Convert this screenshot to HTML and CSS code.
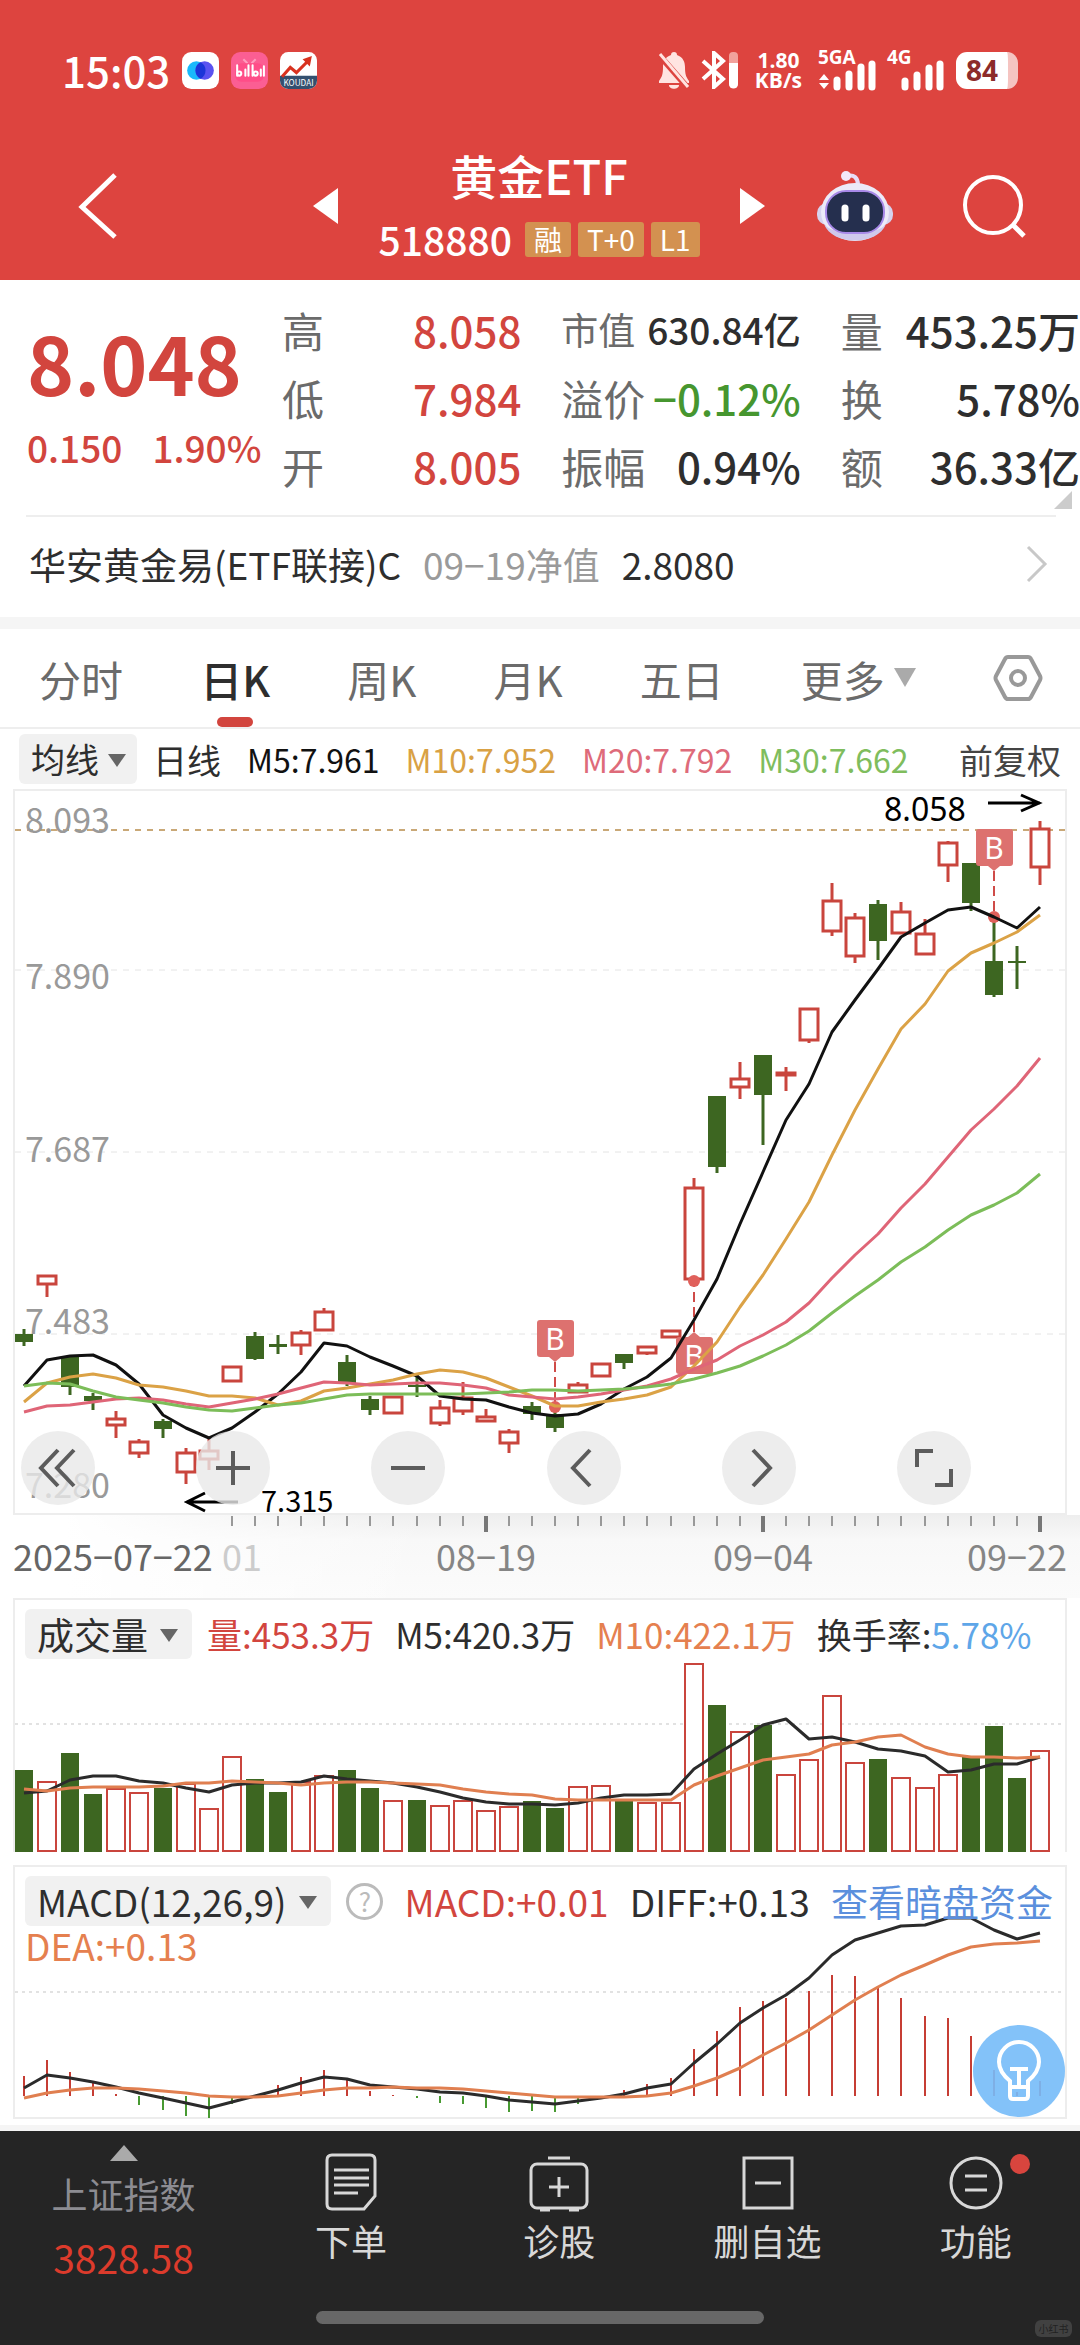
FILE: index.html
```html
<!DOCTYPE html>
<html lang="zh-CN">
<head>
    <meta charset="utf-8">
    <meta name="viewport" content="width=device-width, initial-scale=1">
    <title>黄金ETF 518880</title>
    <link rel="stylesheet" href="styles.css">
</head>
<body>
<header class="header">
    <div class="status">
        <span class="clock">15:03</span>
        <svg class="app-icon" viewBox="0 0 36 36"><rect width="36" height="36" rx="9" fill="#fff"/><circle cx="14" cy="18" r="9" fill="#19b9fb"/><circle cx="22" cy="18" r="9" fill="#5a52f0"/><path d="M18 10a9 9 0 0 1 0 16a9 9 0 0 1 0-16z" fill="#1b35d8"/></svg>
        <svg class="app-icon" viewBox="0 0 36 36"><rect width="36" height="36" rx="9" fill="#fb5e93"/><path d="M12 7l4 4M24 7l-4 4" stroke="#ff9cbe" stroke-width="2"/><rect x="4" y="11" width="28" height="18" rx="6" fill="#ff4d88"/><g fill="none" stroke="#fff" stroke-width="2" stroke-linecap="round"><path d="M6 13v10M14 17v6M17 13v10M21 13v10M29 17v6M32 14v9"/><circle cx="8" cy="21" r="2"/><circle cx="24" cy="21" r="2"/></g></svg>
        <svg class="app-icon" viewBox="0 0 36 36"><rect width="36" height="36" rx="8" fill="#fff"/><path d="M0 23h36v5a8 8 0 0 1-8 8H8a8 8 0 0 1-8-8z" fill="#34506f"/><path d="M2 24L10 15l6 5L28 8" fill="none" stroke="#d8321f" stroke-width="3"/><path d="M22 7l9-3-2 10z" fill="#d8321f"/><text x="18" y="33" class="app-text">KOUDAI</text></svg>
        <span class="status-right">
            <svg width="32" height="38" viewBox="0 0 32 38"><path d="M16 1c2 0 3 1 3 3 6 2 8 7 8 12 0 7 1 10 4 14v2H1v-2c3-4 4-7 4-14 0-5 2-10 8-12 0-2 1-3 3-3zM11 34h10c0 5-10 5-10 0z" fill="#ffe4e1"/><path d="M2 5l28 32" stroke="#dd443f" stroke-width="6"/><path d="M2 3l28 33" stroke="#ffe4e1" stroke-width="3"/></svg>
            <svg width="38" height="38" viewBox="0 0 38 38"><path d="M2 10l20 18-9 8V2l9 8L2 28" fill="none" stroke="#fff" stroke-width="4"/><rect x="28" y="1" width="9" height="36" rx="4" fill="#f2a19c"/><path d="M28 12h9v21a4 4 0 0 1-9 0z" fill="#fff"/></svg>
            <span class="net-speed"><span>1.80</span><span>KB/s</span></span>
            <svg class="signal" width="58" height="42" viewBox="0 0 58 42"><text x="0" y="15" class="net-text">5GA</text><path d="M6 25l5 6H1zM6 40l5-6H1z" fill="#fff"/><path d="M19 38v-7M31 38V25M43 38V18M54 38V15" stroke="#fff" stroke-width="7" stroke-linecap="round"/></svg>
            <svg class="signal" width="58" height="42" viewBox="0 0 58 42"><text x="0" y="15" class="net-text">4G</text><path d="M18 38v-6M30 38V26M42 38V19M53 38V15" stroke="#fff" stroke-width="7" stroke-linecap="round"/></svg>
            <span class="battery">84</span>
        </span>
    </div>
    <div class="titlebar">
        <button class="icon-btn" aria-label="返回"><svg width="44" height="70" viewBox="0 0 44 70"><path d="M39 4L6 36l33 30" fill="none" stroke="#fff" stroke-width="5"/></svg></button>
        <div class="title-group">
            <button class="icon-btn" aria-label="上一只"><svg width="26" height="38" viewBox="0 0 26 38"><path d="M26 1v36L1 19z" fill="#fff"/></svg></button>
            <div class="title">
                <h1>黄金ETF</h1>
                <div class="code"><span>518880</span><span class="tag">融</span><span class="tag">T+0</span><span class="tag">L1</span></div>
            </div>
            <button class="icon-btn" aria-label="下一只"><svg width="26" height="38" viewBox="0 0 26 38"><path d="M0 1v36l25-18z" fill="#fff"/></svg></button>
        </div>
        <button class="icon-btn" aria-label="智能助手"><svg width="76" height="72" viewBox="0 0 76 72"><path d="M41 15c0-7-4-11-11-9" fill="none" stroke="#e8dcf6" stroke-width="4"/><circle cx="29" cy="6" r="5" fill="#f3e8fa"/><rect x="0" y="33" width="76" height="22" rx="10" fill="#d6d2ee"/><ellipse cx="38" cy="42" rx="34" ry="29" fill="#eceaf8"/><path d="M7 54c8 22 54 22 62 0-8 12-54 12-62 0z" fill="#cfc9ec"/><rect x="9" y="21" width="58" height="42" rx="20" fill="#252f4e" stroke="#a889e8" stroke-width="2"/><path d="M28 38v10M49 38v10" stroke="#fff" stroke-width="7" stroke-linecap="round"/></svg></button>
        <button class="icon-btn search" aria-label="搜索"><svg width="64" height="64" viewBox="0 0 64 64"><circle cx="31" cy="31" r="28" fill="none" stroke="#fff" stroke-width="4"/><path d="M51 51l11 11" stroke="#fff" stroke-width="5"/></svg></button>
    </div>
</header>

<main>
    <section class="quote">
        <div class="price">
            <div class="price-now">8.048</div>
            <div class="price-diff"><span>0.150</span><span>1.90%</span></div>
        </div>
        <dl class="stats">
            <div><dt>高</dt><dd class="red">8.058</dd></div>
            <div class="small"><dt>市值</dt><dd>630.84亿</dd></div>
            <div><dt>量</dt><dd>453.25万</dd></div>
            <div><dt>低</dt><dd class="red">7.984</dd></div>
            <div><dt>溢价</dt><dd class="green">−0.12%</dd></div>
            <div><dt>换</dt><dd>5.78%</dd></div>
            <div><dt>开</dt><dd class="red">8.005</dd></div>
            <div><dt>振幅</dt><dd>0.94%</dd></div>
            <div><dt>额</dt><dd>36.33亿</dd></div>
        </dl>
        <svg class="corner" width="18" height="18" viewBox="0 0 18 18"><path d="M18 0v18H0z" fill="#ccc"/></svg>
    </section>

    <a class="fund" href="#fund">
        <span>华安黄金易(ETF联接)C</span>
        <span class="fund-date">09−19净值</span>
        <span>2.8080</span>
        <svg class="fund-arrow" width="22" height="38" viewBox="0 0 22 38"><path d="M2 2l17 17L2 36" fill="none" stroke="#c8c8c8" stroke-width="3"/></svg>
    </a>

    <nav class="tabs">
        <button>分时</button>
        <button class="active">日K</button>
        <button>周K</button>
        <button>月K</button>
        <button>五日</button>
        <button class="more">更多<svg width="22" height="20" viewBox="0 0 22 20"><path d="M0 0h22L11 19z" fill="#aaa"/></svg></button>
        <button aria-label="设置"><svg width="50" height="48" viewBox="0 0 50 48"><path d="M15 3h20q2 0 3 2l9 17q1 2 0 4l-9 17q-1 2-3 2H15q-2 0-3-2L3 26q-1-2 0-4l9-17q1-2 3-2z" fill="none" stroke="#999" stroke-width="4"/><circle cx="25" cy="24" r="7" fill="none" stroke="#999" stroke-width="4"/></svg></button>
    </nav>

    <div class="ma-row">
        <span class="picker"><select aria-label="主图指标"><option>均线</option></select></span>
        <span>日线</span>
        <span class="ma5">M5:7.961</span>
        <span class="ma10">M10:7.952</span>
        <span class="ma20">M20:7.792</span>
        <span class="ma30">M30:7.662</span>
        <span class="adjust">前复权</span>
    </div>

    <section class="panel">
        <svg class="plot" id="kline" viewBox="15 790 1050 722">
            <g class="grid">
                <path d="M15 969H1065M15 1151H1065M15 1333H1065"/>
                <path class="top-line" d="M15 829H1065"/>
            </g>
            <g class="price-label">
                <text x="25" y="832">8.093</text>
                <text x="25" y="988">7.890</text>
                <text x="25" y="1161">7.687</text>
                <text x="25" y="1333">7.483</text>
                <text x="25" y="1497">7.280</text>
            </g>
        </svg>
        <div class="tools">
            <button aria-label="最早"><svg width="40" height="40" viewBox="0 0 40 40"><path d="M20 2L3 20l17 18M36 2L19 20l17 18"/></svg></button>
            <button aria-label="放大"><svg width="40" height="40" viewBox="0 0 40 40"><path d="M3 20h34M20 3v34"/></svg></button>
            <button aria-label="缩小"><svg width="40" height="40" viewBox="0 0 40 40"><path d="M3 20h34"/></svg></button>
            <button aria-label="左移"><svg width="40" height="40" viewBox="0 0 40 40"><path d="M26 2L9 20l17 18"/></svg></button>
            <button aria-label="右移"><svg width="40" height="40" viewBox="0 0 40 40"><path d="M14 2l17 18-17 18"/></svg></button>
            <button aria-label="全屏"><svg width="40" height="40" viewBox="0 0 40 40"><path d="M3 19V3h16M37 21v16H21"/></svg></button>
        </div>
    </section>

    <svg class="axis" id="axis" viewBox="0 1514 1080 83">
        <text x="13" y="1570" class="first">2025−07−22</text>
        <text x="222" y="1570" class="faded">01</text>
        <text x="486" y="1570" text-anchor="middle">08−19</text>
        <text x="763" y="1570" text-anchor="middle">09−04</text>
        <text x="1067" y="1570" text-anchor="end">09−22</text>
    </svg>

    <section class="panel volume">
        <svg class="plot" id="volume" viewBox="15 1599 1050 252"><path class="dots" d="M15 1723H1065"/></svg>
        <div class="panel-head">
            <span class="picker"><select aria-label="副图指标一"><option>成交量</option></select></span>
            <span class="red">量:453.3万</span>
            <span>M5:420.3万</span>
            <span class="orange">M10:422.1万</span>
            <span>换手率:<span class="blue">5.78%</span></span>
        </div>
    </section>

    <section class="panel">
        <svg class="plot" id="macd" viewBox="15 1866 1050 250"><path class="dots" d="M15 1991H1065"/></svg>
        <div class="panel-head macd-head">
            <span class="picker"><select aria-label="副图指标二"><option>MACD(12,26,9)</option></select></span>
            <button class="help" aria-label="说明">?</button>
            <span class="red">MACD:+0.01</span>
            <span>DIFF:+0.13</span>
            <a class="dark-pool" href="#funds">查看暗盘资金</a>
            <span class="orange dea">DEA:+0.13</span>
        </div>
        <button class="bulb" aria-label="提示"><svg width="46" height="64" viewBox="0 0 46 64"><path d="M14 48v-6C8 37 3 31 3 23a20 20 0 0 1 40 0c0 8-5 14-11 19v6zM14 48v9q0 3 3 3h12q3 0 3-3v-9M14 30h18M23 30v17" fill="none" stroke="#fff" stroke-width="4"/></svg></button>
    </section>
</main>

<footer class="bottom">
    <nav class="bottom-nav">
        <a href="#index" class="index">
            <svg width="28" height="16" viewBox="0 0 28 16"><path d="M14 0l14 16H0z" fill="#aaa"/></svg>
            <span>上证指数</span>
            <span class="index-value">3828.58</span>
        </a>
        <a href="#order">
            <svg width="60" height="60" viewBox="0 0 60 60"><path d="M11 3h38q5 0 5 5v36L43 57H11q-5 0-5-5V8q0-5 5-5zM13 18h35M13 26h35M13 33h35M13 41h24"/></svg>
            下单
        </a>
        <a href="#diagnose">
            <svg width="60" height="60" viewBox="0 0 60 60"><rect x="2" y="12" width="56" height="44" rx="6"/><path d="M19 6h22M20 35h20M30 25v20M11 58h10M40 58h10"/></svg>
            诊股
        </a>
        <a href="#remove">
            <svg width="60" height="60" viewBox="0 0 60 60"><path d="M6 6h48v50H6zM17 31h26"/></svg>
            删自选
        </a>
        <a href="#functions">
            <svg width="60" height="60" viewBox="0 0 60 60"><circle cx="30" cy="31" r="25"/><path d="M19 24h22M19 38h22"/></svg>
            功能
            <i class="badge"></i>
        </a>
    </nav>
    <div class="home-bar"></div>
    <span class="watermark">小红书</span>
</footer>
<script src="chart.js"></script>
</body>
</html>
```

FILE: styles.css
```css
* {
    box-sizing: border-box;
}

body {
    margin: 0;
    background: #fff;
    color: #2e2e2e;
    font-family: "Noto Sans CJK SC", "Noto Sans", sans-serif;
}

button, select {
    margin: 0;
    padding: 0;
    border: 0;
    background: none;
    color: inherit;
    font: inherit;
}

a {
    color: inherit;
    text-decoration: none;
}

svg {
    display: block;
    flex: none;
}

.red { color: #d2453e; }
.green { color: #46962f; }
.orange { color: #e5804f; }
.blue { color: #5ea6e8; }

/* header */
.header {
    background: #dd443f;
    color: #fff;
    height: 280px;
}

.status {
    display: flex;
    align-items: center;
    gap: 12px;
    height: 140px;
    padding: 0 62px;
}

.clock {
    font-size: 42px;
    font-weight: 500;
    line-height: 42px;
}

.app-icon {
    width: 37px;
    height: 37px;
}

.app-text {
    font-size: 8px;
    fill: #fff;
    text-anchor: middle;
}

.status-right {
    display: flex;
    align-items: center;
    gap: 11px;
    margin-left: auto;
}

.net-speed {
    display: flex;
    flex-direction: column;
    padding: 0 5px;
    font: bold 21px/20px "Open Sans", sans-serif;
    text-align: center;
}

.signal {
    overflow: visible;
}

.net-text {
    font: bold 19px "Open Sans", sans-serif;
    fill: #fff;
}

.battery {
    width: 62px;
    border-right: 10px solid #f5c4c1;
    border-radius: 11px;
    background: #fff;
    color: #8c2b2a;
    font: bold 28px/37px "Noto Sans", sans-serif;
    text-align: center;
}

.titlebar {
    display: flex;
    align-items: center;
    height: 140px;
    padding: 0 54px 8px 76px;
}

.icon-btn {
    display: flex;
}

.title-group {
    display: flex;
    align-items: center;
    justify-content: space-between;
    flex: 1;
    margin: 0 51px 0 192px;
}

.search {
    margin-left: 69px;
}

.title {
    text-align: center;
}

.title h1 {
    margin: 0;
    font-size: 47px;
    line-height: 66px;
    font-weight: 500;
}

.code {
    display: flex;
    align-items: center;
    justify-content: center;
    gap: 7px;
    font-size: 39px;
    font-weight: 500;
    line-height: 62px;
}

.code span:first-child {
    margin-right: 6px;
}

.tag {
    padding: 0 9px;
    border-radius: 3px;
    background: #d39150;
    font-size: 28px;
    font-weight: 400;
    line-height: 35px;
}

/* quote */
.quote {
    position: relative;
    display: flex;
    height: 237px;
    padding: 15px 0 0 27px;
}

.quote::after {
    content: "";
    position: absolute;
    left: 26px;
    right: 24px;
    bottom: 0;
    border-bottom: 2px solid #eee;
}

.price {
    width: 255px;
    color: #d2453e;
}

.price-now {
    font-size: 80px;
    line-height: 132px;
    font-weight: 700;
}

.price-diff {
    display: flex;
    gap: 30px;
    font-size: 37px;
    font-weight: 500;
    line-height: 40px;
}

.stats {
    flex: 1;
    display: grid;
    grid-template-columns: repeat(3, 1fr);
    grid-auto-rows: 68px;
    column-gap: 40px;
    margin: 0;
    font-size: 42px;
}

.stats div {
    display: flex;
    align-items: center;
    justify-content: space-between;
    white-space: nowrap;
}

.stats .small {
    font-size: 37px;
}

.stats dt {
    color: #6b6b6b;
}

.stats dd {
    margin: 0;
    font-weight: 500;
}

.corner {
    position: absolute;
    right: 8px;
    bottom: 8px;
}

.fund {
    display: flex;
    align-items: center;
    gap: 22px;
    height: 100px;
    padding: 0 32px 6px 29px;
    font-size: 37px;
}

.fund-date {
    color: #9a9a9a;
}

.fund-arrow {
    margin-left: auto;
}

/* period tabs */
.tabs {
    display: flex;
    justify-content: space-between;
    height: 112px;
    padding: 0 37px 0 39px;
    border-top: 12px solid #f5f5f5;
    border-bottom: 2px solid #eee;
    color: #6b6b6b;
    font-size: 42px;
}

.tabs button {
    display: flex;
    align-items: center;
}

.tabs .active {
    position: relative;
    color: #2e2e2e;
    font-weight: 500;
}

.tabs .active::after {
    content: "";
    position: absolute;
    left: 50%;
    bottom: 0;
    width: 36px;
    height: 10px;
    margin-left: -18px;
    border-radius: 5px;
    background: #d2453e;
}

.more {
    gap: 9px;
}

/* indicators */
.picker {
    position: relative;
    display: inline-flex;
    border-radius: 6px;
    background: #f1f1f1;
}

.picker select {
    appearance: none;
    padding: 0 42px 0 12px;
    line-height: 50px;
}

.picker::after {
    content: "";
    position: absolute;
    right: 14px;
    top: 20px;
    border: 9px solid transparent;
    border-top: 13px solid #666;
    border-bottom: 0;
}

.ma-row {
    display: flex;
    align-items: center;
    gap: 26px;
    height: 60px;
    padding: 0 19px;
    font-size: 34px;
    white-space: nowrap;
}

.ma-row .picker {
    margin-right: -10px;
}

.ma-row .picker select {
    padding-right: 38px;
}

.ma-row .picker::after {
    right: 11px;
}

.ma5, .ma10, .ma20, .ma30 {
    font-size: 32px;
}

.ma5 { color: #111; }
.ma10 { color: #d9a144; }
.ma20 { color: #de6b7a; }
.ma30 { color: #7fbd5d; }

.adjust {
    margin-left: auto;
    color: #444;
}

/* charts */
.panel {
    position: relative;
    display: grid;
    margin: 0 13px;
    border: 2px solid #ededed;
}

.plot, .tools, .panel-head {
    grid-area: 1 / 1;
}

.plot {
    width: 100%;
    height: auto;
    overflow: visible;
}

.grid path {
    stroke: #e4e4e4;
    stroke-width: 1;
    stroke-dasharray: 6 6;
}

.grid .top-line {
    stroke: #c9a877;
    stroke-width: 2;
}

.dots {
    stroke: #e2e2e2;
    stroke-width: 2;
    stroke-dasharray: 3 4;
}

.price-label {
    fill: #999;
    font-size: 34px;
}

.high-label {
    fill: #000;
    font: 32px "Noto Sans", sans-serif;
}

.low-label {
    fill: #000;
    font-size: 29px;
}

.buy-label {
    fill: #fff;
    font: 30px "Noto Sans", sans-serif;
    text-anchor: middle;
}

.tools {
    align-self: end;
    display: flex;
    justify-content: space-between;
    padding: 0 94px 8px 6px;
}

.tools button {
    display: flex;
    align-items: center;
    justify-content: center;
    width: 74px;
    height: 74px;
    border-radius: 50%;
    background: rgba(232, 232, 232, 0.8);
}

.tools path {
    fill: none;
    stroke: #5c5c5c;
    stroke-width: 4;
}

.axis {
    width: 100%;
    height: auto;
    background: linear-gradient(to right, #fff 6%, rgba(255, 255, 255, 0) 40%), linear-gradient(#eee, #f8f8f8 30%, #fbfbfb);
    font-size: 36px;
    fill: #858585;
}

.axis .first {
    fill: #666;
}

.axis .faded {
    fill: #ccc;
}

.axis path {
    stroke: #999;
    stroke-width: 2;
}

.axis .major {
    stroke: #777;
    stroke-width: 4;
}

.volume {
    margin-bottom: 13px;
    border-bottom: 0;
}

.panel-head {
    position: relative;
    align-self: start;
    display: flex;
    align-items: center;
    gap: 21px;
    padding: 9px 0 0 10px;
    font-size: 35px;
    line-height: 50px;
    white-space: nowrap;
}

.panel-head .picker {
    margin-right: -6px;
}

.panel-head .picker select {
    padding-right: 44px;
    font-size: 37px;
}

.macd-head {
    flex-wrap: wrap;
    justify-content: space-between;
    gap: 0;
    padding-right: 12px;
    font-size: 37px;
}

.help {
    width: 37px;
    height: 37px;
    border: 3px solid #bbb;
    border-radius: 50%;
    color: #bbb;
    font-size: 26px;
    line-height: 30px;
}

.dark-pool {
    color: #5b8fdd;
}

.dea {
    flex-basis: 100%;
    line-height: 38px;
}

.bulb {
    position: absolute;
    right: 0;
    bottom: 0;
    display: flex;
    align-items: center;
    justify-content: center;
    width: 92px;
    height: 92px;
    border-radius: 50%;
    background: rgba(118, 187, 248, 0.9);
}

/* bottom bar */
.bottom {
    position: relative;
    height: 221px;
    margin-top: 6px;
    border-top: 6px solid #f5f5f5;
    background: #252525;
    color: #d8d8d8;
}

.bottom-nav {
    display: grid;
    grid-template-columns: 247px repeat(4, 1fr);
    height: 176px;
}

.bottom-nav a {
    position: relative;
    display: flex;
    flex-direction: column;
    align-items: center;
    padding-top: 21px;
    font-size: 36px;
    line-height: 56px;
}

.bottom-nav a path, .bottom-nav a rect, .bottom-nav a circle {
    fill: none;
    stroke: #d8d8d8;
    stroke-width: 3;
}

.bottom-nav .index {
    padding-top: 14px;
    color: #8c8c92;
    line-height: 64px;
}

.bottom-nav .index path {
    fill: #aaa;
    stroke: none;
}

.bottom-nav .index-value {
    color: #dc3b2c;
    font-size: 39px;
}

.badge {
    position: absolute;
    top: 23px;
    left: 50%;
    width: 20px;
    height: 20px;
    margin-left: 34px;
    border-radius: 50%;
    background: #d8453e;
}

.home-bar {
    width: 448px;
    height: 13px;
    margin: 4px auto 0;
    border-radius: 7px;
    background: #676767;
}

.watermark {
    position: absolute;
    right: 8px;
    bottom: 9px;
    width: 37px;
    border-radius: 6px;
    background: #414141;
    color: #222;
    font-size: 10px;
    line-height: 17px;
    text-align: center;
}
```

FILE: chart.js
```js
// candle: r = up, g = down, then high, body top, body bottom, low
var candles = [
    ["g", 1328, 1333, 1341, 1345], ["r", 1275, 1275, 1283, 1296], ["g", 1354, 1355, 1386, 1394],
    ["g", 1392, 1395, 1400, 1409], ["r", 1410, 1418, 1424, 1437], ["r", 1438, 1441, 1452, 1457],
    ["g", 1418, 1420, 1428, 1437], ["r", 1447, 1452, 1471, 1483], ["r", 1438, 1450, 1458, 1469],
    ["r", 1366, 1366, 1380, 1380], ["g", 1331, 1335, 1358, 1359], ["g", 1334, 1343, 1346, 1353],
    ["r", 1329, 1332, 1344, 1354], ["r", 1307, 1311, 1329, 1329], ["g", 1354, 1361, 1382, 1385],
    ["g", 1395, 1398, 1409, 1414], ["r", 1396, 1396, 1412, 1412], ["g", 1373, 1384, 1386, 1396],
    ["r", 1399, 1407, 1422, 1425], ["r", 1381, 1397, 1410, 1414], ["r", 1408, 1416, 1420, 1420],
    ["r", 1428, 1431, 1442, 1452], ["g", 1401, 1405, 1413, 1419], ["g", 1408, 1413, 1427, 1431],
    ["r", 1381, 1384, 1391, 1391], ["r", 1363, 1363, 1375, 1375], ["g", 1353, 1353, 1362, 1368],
    ["r", 1346, 1346, 1352, 1354], ["r", 1330, 1330, 1336, 1337], ["r", 1177, 1187, 1278, 1278],
    ["g", 1095, 1095, 1166, 1172], ["r", 1061, 1078, 1086, 1098], ["g", 1054, 1054, 1094, 1144],
    ["r", 1066, 1072, 1074, 1090], ["r", 1008, 1008, 1039, 1042], ["r", 882, 900, 930, 935],
    ["r", 912, 917, 955, 962], ["g", 899, 903, 940, 959], ["r", 901, 911, 932, 932],
    ["r", 918, 933, 953, 953], ["r", 840, 842, 864, 881], ["g", 862, 862, 902, 910],
    ["g", 916, 960, 994, 996], ["g", 945, 960, 962, 988], ["r", 820, 828, 866, 884]
];
var ma5 = [1385, 1359, 1355, 1354, 1364, 1383, 1414, 1427, 1437, 1427, 1411, 1393, 1371, 1342, 1345, 1356, 1365, 1375, 1395, 1398, 1399, 1406, 1412, 1415, 1413, 1403, 1388, 1376, 1357, 1319, 1278, 1223, 1171, 1119, 1083, 1031, 999, 968, 936, 922, 909, 906, 916, 927, 906];
var ma10 = [1401, 1382, 1376, 1373, 1377, 1384, 1386, 1390, 1395, 1395, 1397, 1404, 1400, 1390, 1387, 1383, 1379, 1373, 1369, 1371, 1377, 1386, 1395, 1405, 1405, 1401, 1398, 1394, 1386, 1365, 1341, 1306, 1274, 1238, 1201, 1154, 1109, 1068, 1028, 1003, 970, 952, 942, 931, 914];
var ma20 = [1411, 1405, 1404, 1401, 1398, 1397, 1399, 1403, 1406, 1402, 1398, 1393, 1387, 1381, 1382, 1384, 1383, 1382, 1382, 1384, 1387, 1394, 1396, 1398, 1396, 1393, 1389, 1385, 1378, 1368, 1359, 1345, 1334, 1321, 1302, 1277, 1254, 1233, 1207, 1183, 1156, 1129, 1108, 1085, 1057];
var ma30 = [1385, 1382, 1383, 1390, 1396, 1399, 1402, 1406, 1409, 1410, 1407, 1404, 1402, 1398, 1394, 1393, 1393, 1393, 1393, 1393, 1392, 1391, 1389, 1389, 1390, 1389, 1388, 1386, 1383, 1378, 1372, 1365, 1355, 1344, 1330, 1312, 1295, 1279, 1261, 1246, 1229, 1214, 1204, 1192, 1173];

// volume bar heights
var volumes = [82, 71, 99, 58, 64, 60, 64, 69, 44, 96, 73, 60, 71, 77, 82, 64, 52, 52, 47, 52, 42, 46, 51, 44, 66, 67, 52, 50, 50, 189, 147, 121, 127, 78, 93, 157, 90, 93, 75, 65, 78, 95, 126, 74, 102];
var vol5 = [1792, 1790, 1779, 1775, 1775, 1780, 1782, 1787, 1791, 1784, 1782, 1782, 1781, 1775, 1778, 1780, 1782, 1786, 1791, 1797, 1801, 1803, 1803, 1804, 1802, 1797, 1794, 1794, 1793, 1768, 1753, 1739, 1724, 1718, 1738, 1736, 1741, 1748, 1750, 1755, 1771, 1769, 1763, 1763, 1756];
var vol10 = [1788, 1790, 1787, 1786, 1786, 1786, 1785, 1782, 1782, 1780, 1781, 1782, 1784, 1782, 1781, 1781, 1782, 1783, 1784, 1788, 1791, 1793, 1794, 1798, 1799, 1799, 1799, 1799, 1799, 1784, 1775, 1767, 1759, 1756, 1753, 1744, 1741, 1736, 1734, 1746, 1753, 1756, 1756, 1757, 1756];

// macd columns, positive is up
var hist = [20, 36, 24, 15, 2, -9, -14, -20, -22, -8, 0, 11, 19, 26, 16, 5, 1, -2, -7, -8, -12, -16, -15, -16, -8, -2, 6, 12, 18, 47, 65, 89, 95, 98, 105, 121, 120, 108, 98, 80, 78, 60, 26, 4, 15];
var diff = [2087, 2074, 2077, 2081, 2086, 2092, 2097, 2102, 2107, 2101, 2095, 2089, 2082, 2076, 2078, 2084, 2086, 2088, 2091, 2092, 2095, 2099, 2101, 2103, 2100, 2097, 2093, 2087, 2083, 2062, 2043, 2022, 2007, 1994, 1977, 1954, 1939, 1932, 1925, 1924, 1917, 1917, 1929, 1938, 1932];
var dea = [2097, 2092, 2089, 2087, 2087, 2088, 2090, 2092, 2095, 2096, 2096, 2095, 2092, 2089, 2087, 2087, 2086, 2087, 2087, 2088, 2090, 2092, 2094, 2096, 2096, 2096, 2096, 2095, 2092, 2085, 2077, 2067, 2054, 2042, 2029, 2014, 1999, 1986, 1974, 1964, 1954, 1946, 1943, 1942, 1940];

var RED = "#c9453d";
var GREEN = "#3d6621";

function x(i) {
    return Math.round(24 + i * 23.09);
}

function add(id, html) {
    document.getElementById(id).insertAdjacentHTML("beforeend", html);
}

function rect(cx, y, w, h, fill, stroke, sw) {
    return '<rect x="' + (cx - w / 2) + '" y="' + y + '" width="' + w + '" height="' + h + '" fill="' + fill + '" stroke="' + stroke + '" stroke-width="' + sw + '"/>';
}

function stroke(d, color, width, extra) {
    return '<path d="' + d + '" fill="none" stroke="' + color + '" stroke-width="' + width + '" ' + (extra || "") + '/>';
}

function line(values, color, width) {
    var points = values.map(function (y, i) { return x(i) + " " + y; });
    return stroke("M" + points.join("L"), color, width, 'stroke-linejoin="round"');
}

// buy marker: tag box with a dashed lead to the traded price
function buy(i, top, dot) {
    var cx = x(i);
    var down = dot > top;
    var edge = down ? top + 37 : top;
    var tip = down ? edge + 5 : edge - 5;
    return stroke("M" + cx + " " + tip + "V" + dot, "#cf4b48", 2, 'stroke-dasharray="10 5"') +
        '<circle cx="' + cx + '" cy="' + dot + '" r="6" fill="#e0605b"/>' +
        '<rect x="' + (cx - 18) + '" y="' + top + '" width="37" height="37" rx="3" fill="#dd716f"/>' +
        '<path d="M' + (cx - 6) + " " + edge + "H" + (cx + 6) + "L" + cx + " " + tip + 'z" fill="#dd716f"/>' +
        '<text class="buy-label" x="' + cx + '" y="' + (top + 30) + '">B</text>';
}

var html = "";
candles.forEach(function (c, i) {
    if (c[0] === "r") {
        html += stroke("M" + x(i) + " " + c[1] + "V" + c[2] + "M" + x(i) + " " + c[3] + "V" + c[4], RED, 3);
        html += rect(x(i), c[2], 18, c[3] - c[2], "#fff", RED, 3);
    } else {
        html += stroke("M" + x(i) + " " + c[1] + "V" + c[4], GREEN, 3);
        html += rect(x(i), c[2], 18, c[3] - c[2], GREEN, "none", 0);
    }
});
html += buy(23, 1319, 1406) + buy(29, 1336, 1280) + buy(42, 828, 916);
html += line(ma5, "#111", 3) + line(ma10, "#dba246", 3) + line(ma20, "#df6577", 3) + line(ma30, "#7cbd59", 3);
html += '<text class="high-label" x="884" y="820">8.058</text>' + stroke("M988 802H1040M1021 794L1039 802L1021 810", "#000", 3);
html += '<text class="low-label" x="261" y="1511">7.315</text>' + stroke("M238 1501H187M205 1492L187 1501L205 1510", "#000", 3);
add("kline", html);

html = "";
for (var i = 9; i < 45; i++) {
    var major = i === 20 || i === 32 || i === 44;
    html += '<path class="' + (major ? "major" : "minor") + '" d="M' + x(i) + " 1515V" + (major ? 1531 : 1525) + '"/>';
}
add("axis", html);

html = "";
volumes.forEach(function (v, i) {
    if (candles[i][0] === "r") {
        html += rect(x(i), 1852 - v, 18, v - 2, "#fff", RED, 2);
    } else {
        html += rect(x(i), 1851 - v, 18, v, GREEN, "none", 0);
    }
});
html += line(vol5, "#2b2b2b", 3) + line(vol10, "#e07f50", 3);
add("volume", html);

html = "";
hist.forEach(function (h, i) {
    html += stroke("M" + x(i) + " 2095V" + (2095 - h), h > 0 ? "#c63d34" : "#489a32", 2);
});
html += line(diff, "#2b2b2b", 3) + line(dea, "#e07f50", 3);
add("macd", html);
```
